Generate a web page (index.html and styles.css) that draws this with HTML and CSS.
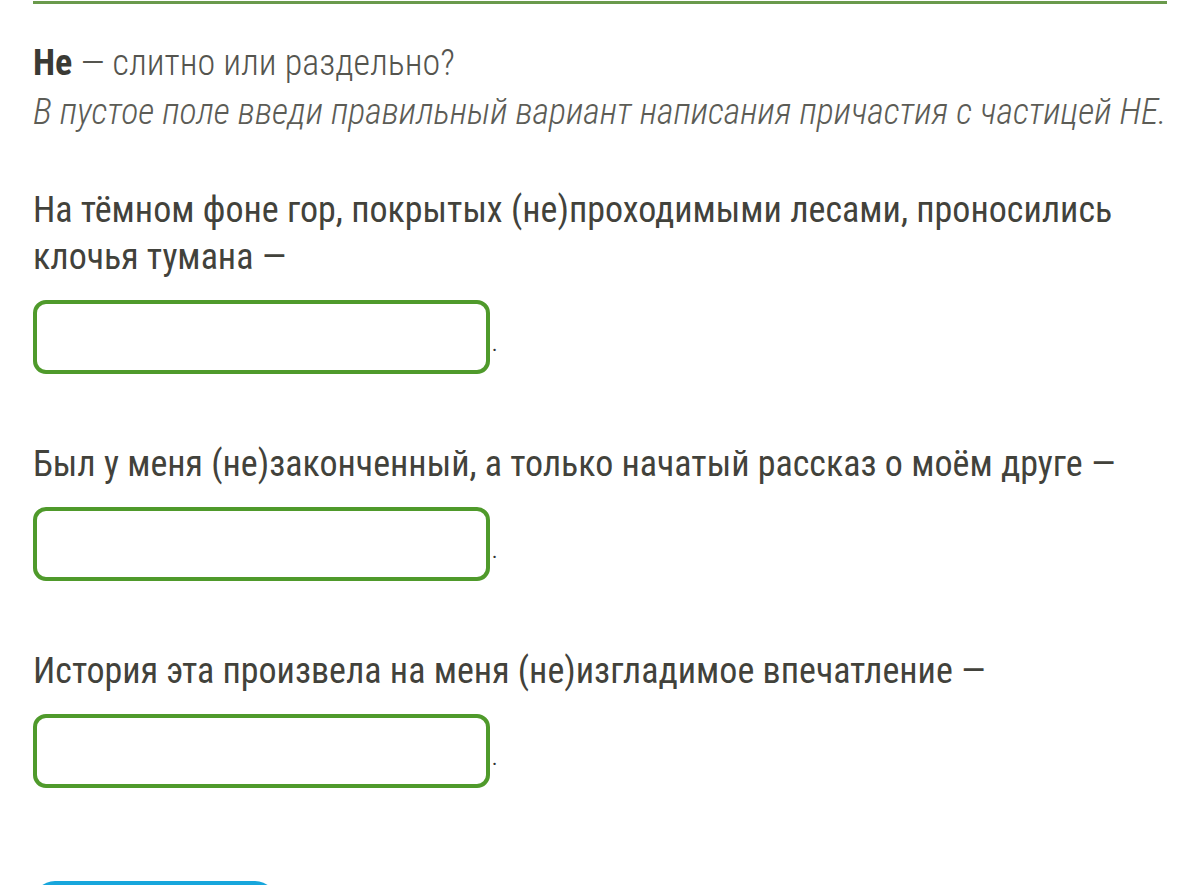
FILE: index.html
```html
<!DOCTYPE html>
<html lang="ru">
<head>
<meta charset="utf-8">
<link rel="stylesheet" href="styles.css">
</head>
<body>
<div class="page">
  <div class="rule"></div>
  <div class="task">
    <p class="title"><b>Не</b> — слитно или раздельно?</p>
    <p class="hint">В пустое поле введи правильный вариант написания причастия с частицей НЕ.</p>
  </div>
  <div class="item">
    <p class="sentence">На тёмном фоне гор, покрытых (не)проходимыми лесами, проносились клочья тумана —</p>
    <div class="answer"><input class="field" type="text"><span class="dot">.</span></div>
  </div>
  <div class="item">
    <p class="sentence">Был у меня (не)законченный, а только начатый рассказ о моём друге —</p>
    <div class="answer"><input class="field" type="text"><span class="dot">.</span></div>
  </div>
  <div class="item">
    <p class="sentence">История эта произвела на меня (не)изгладимое впечатление —</p>
    <div class="answer"><input class="field" type="text"><span class="dot">.</span></div>
  </div>
  <button class="check" type="button">Проверить</button>
</div>
</body>
</html>
```

FILE: styles.css
```css
html, body {
  margin: 0;
  padding: 0;
  background: #ffffff;
}
body {
  font-family: "Roboto Condensed", "Liberation Sans Narrow", Roboto, sans-serif;
  font-stretch: condensed;
  color: #3f3f38;
}
.page {
  padding: 0 33px;
}
.rule {
  height: 3px;
  background: #6a9a4c;
  margin-top: 1px;
}
.task {
  margin-top: 35px;
}
.task p {
  margin: 0;
  font-size: 36px;
  line-height: 49px;
  font-weight: 300;
}
.title {
  color: #55554f;
}
.title b {
  color: #3a3a34;
  font-weight: 700;
}
.hint {
  font-style: italic;
  color: #5c5c56;
  white-space: nowrap;
}
.item {
  margin-top: 50px;
}
.item + .item {
  margin-top: 67px;
}
.sentence {
  margin: 0;
  font-size: 36px;
  line-height: 47px;
  color: #42423b;
}
.answer {
  margin-top: 19px;
  display: flex;
  align-items: flex-end;
}
.field {
  width: 457px;
  height: 74px;
  box-sizing: border-box;
  border: 4px solid #4f9a2b;
  border-radius: 13px;
  background: #fff;
  outline: none;
  padding: 0 10px;
  font: inherit;
}
.dot {
  font-size: 20px;
  line-height: 20px;
  margin-left: 2px;
  margin-bottom: 20px;
  color: #333;
}
.check {
  margin-top: 93px;
  width: 244px;
  height: 60px;
  border: none;
  border-radius: 22px;
  background: #17a6dc;
  color: #fff;
  font: inherit;
  font-size: 30px;
}
```
